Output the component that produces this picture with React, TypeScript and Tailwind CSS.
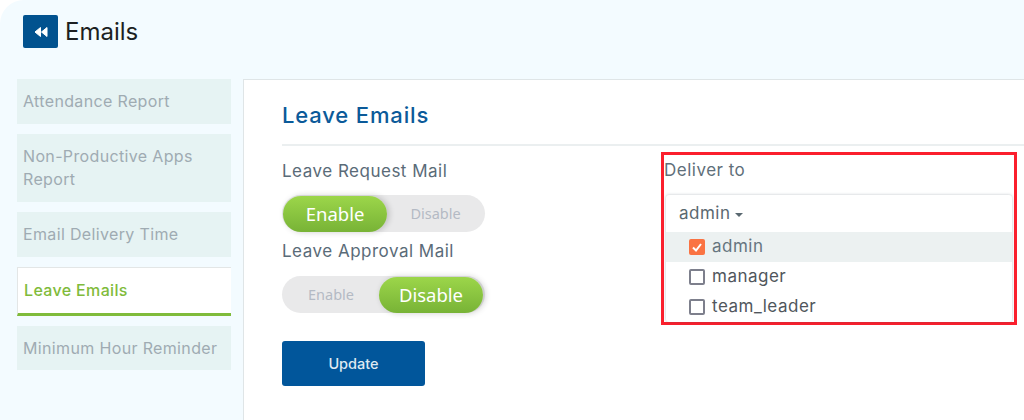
const tabs = [
  { label: "Attendance Report", h: "h-[45px]" },
  { label: "Non-Productive Apps Report", h: "h-[68px]" },
  { label: "Email Delivery Time", h: "h-[45px]" },
  { label: "Leave Emails", h: "h-[49px]", active: true },
  { label: "Minimum Hour Reminder", h: "h-[44px]" },
];

function Toggle({ value }: { value: "Enable" | "Disable" }) {
  const on = "w-[104px] h-[36px] rounded-full bg-gradient-to-b from-[#9cd64a] to-[#78b336] text-white text-[18.5px] flex items-center justify-center shadow-[2px_0_6px_rgba(0,0,0,0.2)]";
  const off = "flex-1 text-center text-[14.5px] text-[#b4bac4]";
  return (
    <div className="w-[203px] h-[37px] rounded-full bg-[#e9e9ea] flex items-center px-px font-['Noto_Sans',sans-serif]">
      {value === "Enable" ? (
        <>
          <span className={on}>Enable</span>
          <span className={off}>Disable</span>
        </>
      ) : (
        <>
          <span className={off}>Enable</span>
          <span className={`${on} mr-px`}>Disable</span>
        </>
      )}
    </div>
  );
}

function Option({ label, checked }: { label: string; checked?: boolean }) {
  return (
    <div className={`h-[30px] flex items-center gap-[7px] pl-[23px] text-[17px] tracking-[0.5px] ${checked ? "bg-[#ecf1f1] text-[#66757f]" : "text-[#50565c]"}`}>
      {checked ? (
        <span className="w-4 h-4 rounded-[2px] bg-[#fa7343] flex items-center justify-center">
          <svg width="12" height="12" viewBox="0 0 12 12" fill="none" stroke="white" strokeWidth="2">
            <path d="M2 6.5 L5 9.5 L10 3" />
          </svg>
        </span>
      ) : (
        <span className="w-4 h-4 rounded-[2px] border-2 border-[#7d7f8c] bg-white" />
      )}
      {label}
    </div>
  );
}

export default function App() {
  return (
    <div className="w-[1024px] h-[420px] overflow-hidden bg-white">
      <div className="h-full rounded-tl-[24px] overflow-hidden bg-[#f3fbff] font-['Inter',sans-serif]">
        <div className="h-[79px] pt-[15px] pl-[23px] flex items-start gap-[7px]">
          <div className="w-[35px] h-[33px] rounded-[2px] bg-[#01528f] flex items-center justify-center">
            <svg width="14" height="12" viewBox="0 0 14 12" fill="white" stroke="white" strokeWidth="1" strokeLinejoin="round">
              <path d="M6.5 1.5 L1 6 L6.5 10.5 Z" />
              <path d="M13 1.5 L7.5 6 L13 10.5 Z" />
            </svg>
          </div>
          <span className="text-[24px] leading-[34px] text-[#1c1f22]">Emails</span>
        </div>
        <div className="flex h-[341px]">
          <div className="w-[243px] shrink-0 pl-[17px] pr-3 flex flex-col gap-[10px]">
            {tabs.map((t) => (
              <div
                key={t.label}
                className={`${t.h} flex items-center pl-[6px] pr-2 text-[16px] tracking-[0.35px] leading-[23px] ${
                  t.active
                    ? "bg-white border-l border-t border-[#e3e6e6] border-b-[3px] border-b-[#7fbb3b] text-[#7fbb3b] font-medium"
                    : "bg-[#e6f3f3] text-[#9fabb2]"
                }`}
              >
                {t.label}
              </div>
            ))}
          </div>
          <div className="flex-1 bg-white border-l border-t border-[#dfe5e7] pl-[38px]">
            <div className="h-[66px] pt-[6px] border-b-2 border-[#ebeff0] flex items-center">
              <h1 className="text-[22px] tracking-[0.85px] font-medium text-[#0b5a99]">Leave Emails</h1>
            </div>
            <div className="flex items-start">
              <div className="w-[379px] shrink-0 pt-[13px]">
                <div className="text-[17px] tracking-[0.5px] leading-[24px] text-[#5a6b78] mb-[12px]">Leave Request Mail</div>
                <Toggle value="Enable" />
                <div className="text-[17px] tracking-[0.5px] leading-[24px] text-[#5a6b78] mt-[7px] mb-[13px]">Leave Approval Mail</div>
                <Toggle value="Disable" />
                <button className="mt-[28px] w-[143px] h-[45px] rounded-[3px] bg-[#01569b] text-[#dfe9f2] text-[14.5px] font-medium">
                  Update
                </button>
              </div>
              <div className="w-[356px] h-[173px] mt-[6px] border-[3px] border-[#fb1f2d]">
                <div className="text-[17px] tracking-[0.5px] leading-[24px] text-[#5f6f7a] pt-[3px] h-[40px]">Deliver to</div>
                <div className="mx-[2px] bg-white rounded-[3px] shadow-[0_0_3px_rgba(60,80,90,0.35)]">
                  <div className="h-[37px] pl-[13px] flex items-center gap-1 text-[17px] tracking-[0.5px] text-[#5a6870]">
                    admin
                    <span className="w-0 h-0 mt-[2px] border-x-[4px] border-x-transparent border-t-[4px] border-t-[#5a6870]" />
                  </div>
                  <Option label="admin" checked />
                  <Option label="manager" />
                  <Option label="team_leader" />
                </div>
              </div>
            </div>
          </div>
        </div>
      </div>
    </div>
  );
}
